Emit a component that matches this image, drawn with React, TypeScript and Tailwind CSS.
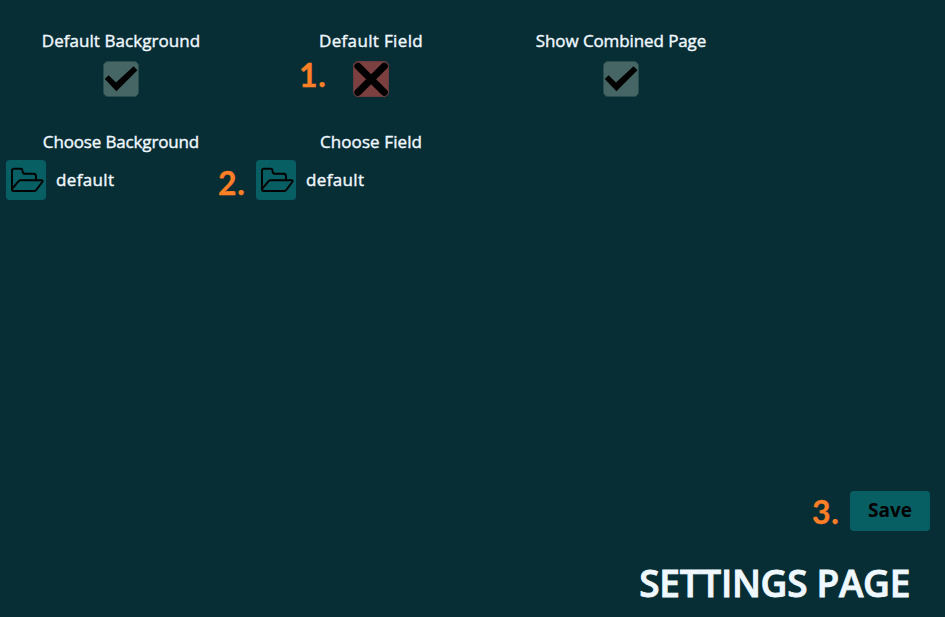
import type { ReactNode } from "react";

const sans = "font-['Trebuchet_MS','Open_Sans',sans-serif] font-medium text-[#f0f8ff] whitespace-nowrap [-webkit-text-stroke:0.4px_#f0f8ff]";

function Label({ children, className }: { children: ReactNode; className: string }) {
  return <div className={`${sans} h-6 text-center text-[17px] leading-6 ${className}`}>{children}</div>;
}

function Toggle({ on }: { on: boolean }) {
  return (
    <button className={`block size-9 rounded-[5px] border ${on ? "border-[#2a4d4d] bg-[#456664]" : "border-[#6b3c3f] bg-[#7d4040]"}`}>
      <svg viewBox="1 1 34 34" className="block size-[34px]">
        {on ? (
          <path d="M1.8 18 5.6 14.2 13 21.6 30.6 5.2 34.4 9.2 13.4 30.2Z" fill="#000" />
        ) : (
          <path d="M5 5.3 31.2 31.2M31.2 5.3 5 31.2" stroke="#000" strokeWidth="7.2" strokeLinecap="round" />
        )}
      </svg>
    </button>
  );
}

function FolderButton() {
  return (
    <button className="block size-10 rounded-[4px] bg-[#085f63]">
      <svg viewBox="0 0 40 40" className="block size-10" fill="none" stroke="#000" strokeWidth="1.9" strokeLinejoin="round" strokeLinecap="round">
        <path d="M6 29.2V10.8Q6 8.8 8 8.8H14.5Q16.5 8.8 16.5 11Q16.5 13.7 19 13.7H27.5Q30 13.7 30 16.2V20.2" />
        <path d="M6.2 28.8 12.8 20.8Q13.6 20.2 14.8 20.2H35.4Q37.4 20.2 36.3 22L30.3 29.8Q29.3 31 28 31H7.6Q6 31 6 29.2" />
      </svg>
    </button>
  );
}

function Marker({ children, className }: { children: string; className: string }) {
  return <span className={`h-8 font-['Lato',sans-serif] text-[32px] leading-8 font-bold tracking-[0.6px] whitespace-nowrap text-[#ff7f27] [-webkit-text-stroke:0.3px_#ff7f27] ${className}`}>{children}</span>;
}

export default function App() {
  return (
    <main className="flex h-[617px] w-[945px] flex-col overflow-hidden bg-[#082e35]">
      <section className="grid grid-cols-[230px_230px_230px] gap-x-5 pt-[29px] pl-1.5">
        <div className="flex flex-col items-center gap-2">
          <Label className="tracking-[0.06px]">Default Background</Label>
          <Toggle on />
        </div>
        <div className="flex flex-col items-center gap-2">
          <Label className="tracking-[0.35px]">Default Field</Label>
          <div className="-mt-0.5 grid w-full grid-cols-[97px_36px]">
            <Marker className="pl-[43px]">1.</Marker>
            <div className="mt-0.5">
              <Toggle on={false} />
            </div>
          </div>
        </div>
        <div className="flex flex-col items-center gap-2">
          <Label className="tracking-[-0.1px]">Show Combined Page</Label>
          <Toggle on />
        </div>
      </section>
      <section className="flex pt-[33px] pl-1.5">
        <div className="w-[212px]">
          <Label className="mb-1.5 w-[230px] tracking-[-0.15px]">Choose Background</Label>
          <div className="flex items-center gap-2.5">
            <FolderButton />
            <span className={`${sans} text-[17px] tracking-[0.35px]`}>default</span>
          </div>
        </div>
        <div className="w-[270px]">
          <Label className="mb-1.5 ml-[38px] w-[230px] tracking-[0.1px]">Choose Field</Label>
          <div className="flex">
            <Marker className="mt-[7px] w-[38px]">2.</Marker>
            <FolderButton />
            <span className={`${sans} ml-2.5 text-[17px] leading-10 tracking-[0.35px]`}>default</span>
          </div>
        </div>
      </section>
      <footer className="mt-auto flex flex-col items-end">
        <div className="mr-[15px] flex h-10 items-start">
          <Marker className="mt-[5px] w-[38px]">3.</Marker>
          <button className="h-10 w-20 rounded-[4px] bg-[#085f63] pb-0.5 font-['Open_Sans',sans-serif] text-[19px] font-bold text-black">Save</button>
        </div>
        <h1 className="mt-7 mr-[35px] mb-2.5 h-12 font-['Trebuchet_MS','Open_Sans',sans-serif] text-[37px] leading-12 font-semibold tracking-[-0.3px] whitespace-nowrap text-[#f0f8ff] [-webkit-text-stroke:0.9px_#f0f8ff]">SETTINGS PAGE</h1>
      </footer>
    </main>
  );
}
